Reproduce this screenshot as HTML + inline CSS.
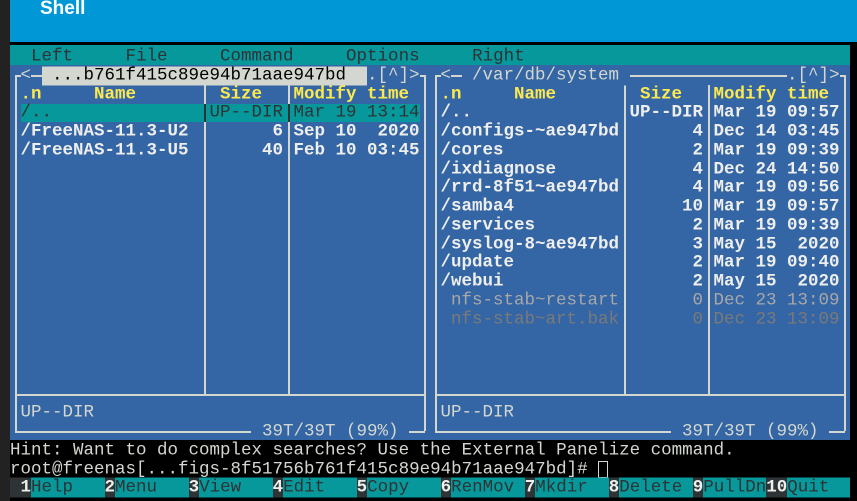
<!DOCTYPE html>
<html><head><meta charset="utf-8"><style>
body{margin:0;width:857px;height:501px;overflow:hidden;background:#000;position:relative}
.a{position:absolute}
.t{position:absolute;white-space:pre;font:17.5px/18.75px "Liberation Mono","DejaVu Sans Mono",monospace;color:#d3d7cf;height:18.75px;transform:translateY(2.5px)}
.b{font-weight:bold;color:#eeeeec}
.y{font-weight:bold;color:#fce94f}
.hl{background:#d3d7cf;color:#000}
.bl{background:#3465a4}
.tl{background:#06989a;color:#2e3436}
.k{font-weight:bold;color:#eeeeec;background:#2e3436}
.ln{position:absolute;background:#d3d7cf}
</style></head><body>
<div class="a" style="left:0;top:0;width:10px;height:501px;background:#222"></div>
<div class="a" style="left:10px;top:0;width:847px;height:42px;background:#0097d7"></div>
<div class="a" style="left:40px;top:-2px;font:bold 19px 'Liberation Sans',sans-serif;color:#fff">Shell</div>
<div class="a" style="left:10px;top:45px;width:840px;height:19.5px;background:#06989a"></div>
<div class="t" style="left:10px;top:45px;color:#2e3436">  Left     File     Command     Options     Right</div>
<div class="a" style="left:10px;top:64.5px;width:840px;height:375px;background:#3465a4"></div>
<div class="ln" style="left:15px;top:75px;width:410px;height:1.5px"></div>
<div class="ln" style="left:15px;top:75px;width:1.5px;height:356px"></div>
<div class="ln" style="left:424px;top:75px;width:1.5px;height:356px"></div>
<div class="ln" style="left:15px;top:431px;width:236px;height:1.5px"></div>
<div class="ln" style="left:409px;top:431px;width:16px;height:1.5px"></div>
<div class="ln" style="left:15px;top:394px;width:410px;height:1.5px"></div>
<div class="ln" style="left:204px;top:85px;width:1.5px;height:309px"></div>
<div class="ln" style="left:288px;top:85px;width:1.5px;height:309px"></div>
<div class="ln" style="left:435px;top:75px;width:410px;height:1.5px"></div>
<div class="ln" style="left:435px;top:75px;width:1.5px;height:356px"></div>
<div class="ln" style="left:844px;top:75px;width:1.5px;height:356px"></div>
<div class="ln" style="left:435px;top:431px;width:236px;height:1.5px"></div>
<div class="ln" style="left:829px;top:431px;width:16px;height:1.5px"></div>
<div class="ln" style="left:435px;top:394px;width:410px;height:1.5px"></div>
<div class="ln" style="left:624px;top:85px;width:1.5px;height:309px"></div>
<div class="ln" style="left:708px;top:85px;width:1.5px;height:309px"></div>
<div class="t bl" style="left:20.5px;top:63.75px">&lt;</div>
<div class="t hl" style="left:41.5px;top:63.75px"> ...b761f415c89e94b71aae947bd  </div>
<div class="t bl" style="left:367px;top:63.75px">.[^]&gt;</div>
<div class="t bl" style="left:440.5px;top:63.75px">&lt;</div>
<div class="t bl" style="left:461.5px;top:63.75px"> /var/db/system </div>
<div class="t bl" style="left:787px;top:63.75px">.[^]&gt;</div>
<div class="t y" style="left:20.5px;top:82.5px">.n</div>
<div class="t y" style="left:94px;top:82.5px">Name</div>
<div class="t y" style="left:220px;top:82.5px">Size</div>
<div class="t y" style="left:293.5px;top:82.5px">Modify time</div>
<div class="t y" style="left:440.5px;top:82.5px">.n</div>
<div class="t y" style="left:514px;top:82.5px">Name</div>
<div class="t y" style="left:640px;top:82.5px">Size</div>
<div class="t y" style="left:713.5px;top:82.5px">Modify time</div>
<div class="a" style="left:20.5px;top:103.5px;width:399px;height:18.75px;background:#06989a"></div>
<div class="a" style="left:204px;top:103.5px;width:2px;height:18.75px;background:#2e3436"></div>
<div class="a" style="left:288px;top:103.5px;width:2px;height:18.75px;background:#2e3436"></div>
<div class="t" style="left:20.5px;top:101.25px;color:#2e3436">/..</div>
<div class="t" style="left:209.5px;top:101.25px;color:#2e3436">UP--DIR</div>
<div class="t" style="left:293.5px;top:101.25px;color:#2e3436">Mar 19 13:14</div>
<div class="t b" style="left:20.5px;top:120px">/FreeNAS-11.3-U2</div>
<div class="t b" style="left:272.5px;top:120px">6</div>
<div class="t b" style="left:293.5px;top:120px">Sep 10  2020</div>
<div class="t b" style="left:20.5px;top:138.75px">/FreeNAS-11.3-U5</div>
<div class="t b" style="left:262px;top:138.75px">40</div>
<div class="t b" style="left:293.5px;top:138.75px">Feb 10 03:45</div>
<div class="t b" style="left:440.5px;top:101.25px">/..</div><div class="t b" style="left:629.5px;top:101.25px">UP--DIR</div><div class="t b" style="left:713.5px;top:101.25px">Mar 19 09:57</div>
<div class="t b" style="left:440.5px;top:120px">/configs-~ae947bd</div><div class="t b" style="left:692.5px;top:120px">4</div><div class="t b" style="left:713.5px;top:120px">Dec 14 03:45</div>
<div class="t b" style="left:440.5px;top:138.75px">/cores</div><div class="t b" style="left:692.5px;top:138.75px">2</div><div class="t b" style="left:713.5px;top:138.75px">Mar 19 09:39</div>
<div class="t b" style="left:440.5px;top:157.5px">/ixdiagnose</div><div class="t b" style="left:692.5px;top:157.5px">4</div><div class="t b" style="left:713.5px;top:157.5px">Dec 24 14:50</div>
<div class="t b" style="left:440.5px;top:176.25px">/rrd-8f51~ae947bd</div><div class="t b" style="left:692.5px;top:176.25px">4</div><div class="t b" style="left:713.5px;top:176.25px">Mar 19 09:56</div>
<div class="t b" style="left:440.5px;top:195px">/samba4</div><div class="t b" style="left:682px;top:195px">10</div><div class="t b" style="left:713.5px;top:195px">Mar 19 09:57</div>
<div class="t b" style="left:440.5px;top:213.75px">/services</div><div class="t b" style="left:692.5px;top:213.75px">2</div><div class="t b" style="left:713.5px;top:213.75px">Mar 19 09:39</div>
<div class="t b" style="left:440.5px;top:232.5px">/syslog-8~ae947bd</div><div class="t b" style="left:692.5px;top:232.5px">3</div><div class="t b" style="left:713.5px;top:232.5px">May 15  2020</div>
<div class="t b" style="left:440.5px;top:251.25px">/update</div><div class="t b" style="left:692.5px;top:251.25px">2</div><div class="t b" style="left:713.5px;top:251.25px">Mar 19 09:40</div>
<div class="t b" style="left:440.5px;top:270px">/webui</div><div class="t b" style="left:692.5px;top:270px">2</div><div class="t b" style="left:713.5px;top:270px">May 15  2020</div>
<div class="t" style="left:440.5px;top:288.75px;color:#a8a8a8"> nfs-stab~restart</div><div class="t" style="left:692.5px;top:288.75px;color:#a8a8a8">0</div><div class="t" style="left:713.5px;top:288.75px;color:#a8a8a8">Dec 23 13:09</div>
<div class="t" style="left:440.5px;top:307.5px;color:#7a7a7a"> nfs-stab~art.bak</div><div class="t" style="left:692.5px;top:307.5px;color:#7a7a7a">0</div><div class="t" style="left:713.5px;top:307.5px;color:#7a7a7a">Dec 23 13:09</div>
<div class="t" style="left:20.5px;top:401.25px">UP--DIR</div>
<div class="t" style="left:440.5px;top:401.25px">UP--DIR</div>
<div class="t" style="left:251.5px;top:420px"> 39T/39T (99%) </div>
<div class="t" style="left:671.5px;top:420px"> 39T/39T (99%) </div>
<div class="t" style="left:10px;top:438.75px">Hint: Want to do complex searches? Use the External Panelize command.</div>
<div class="t" style="left:10px;top:457.5px">root@freenas[...figs-8f51756b761f415c89e94b71aae947bd]# </div>
<div class="a" style="left:598px;top:461px;width:8px;height:15px;border:1.5px solid #d3d7cf"></div>
<div class="t" style="left:10px;top:476.25px"><span class="k"> 1</span><span class="tl">Help   </span><span class="k">2</span><span class="tl">Menu   </span><span class="k">3</span><span class="tl">View   </span><span class="k">4</span><span class="tl">Edit   </span><span class="k">5</span><span class="tl">Copy   </span><span class="k">6</span><span class="tl">RenMov </span><span class="k">7</span><span class="tl">Mkdir  </span><span class="k">8</span><span class="tl">Delete </span><span class="k">9</span><span class="tl">PullDn</span><span class="k">10</span><span class="tl">Quit  </span></div>
</body></html>
